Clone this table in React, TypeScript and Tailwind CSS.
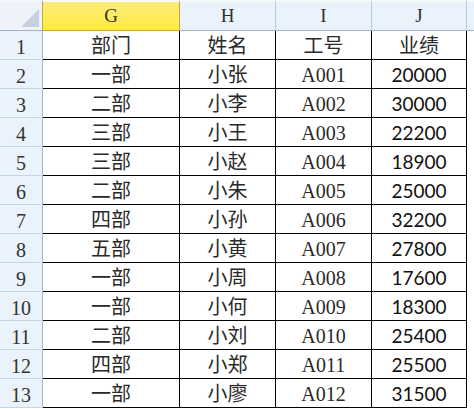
import React from "react";

const rows: [string, string, string, string][] = [
  ["部门", "姓名", "工号", "业绩"],
  ["一部", "小张", "A001", "20000"],
  ["二部", "小李", "A002", "30000"],
  ["三部", "小王", "A003", "22200"],
  ["三部", "小赵", "A004", "18900"],
  ["二部", "小朱", "A005", "25000"],
  ["四部", "小孙", "A006", "32200"],
  ["五部", "小黄", "A007", "27800"],
  ["一部", "小周", "A008", "17600"],
  ["一部", "小何", "A009", "18300"],
  ["二部", "小刘", "A010", "25400"],
  ["四部", "小郑", "A011", "25500"],
  ["一部", "小廖", "A012", "31500"],
];

const dataCell =
  "flex items-center justify-center pt-[2px] border-r border-b border-black text-[20px] text-[#2a2a2a] font-['Liberation_Serif','Noto_Sans_CJK_SC',serif]";

export default function App() {
  return (
    <div className="w-[474px] h-[409px] bg-white overflow-hidden">
      <div className="grid grid-cols-[43px_137px_96px_96px_95px_7px] grid-rows-[31px_repeat(13,29px)]">
        <div className="relative bg-[#eef3f9] border-r border-r-[#c9a24a] border-b border-b-[#9fb3c9] border-t-2 border-t-[#f6f9fc]">
          <div className="absolute right-[3px] bottom-[3px] w-[18px] h-[18px] bg-[#c6d1dd] [clip-path:polygon(100%_0,100%_100%,0_100%)]" />
        </div>
        <div className="flex items-center justify-center bg-gradient-to-b from-[#fcec7a] to-[#ffec33] border-r border-r-[#c9a24a] border-b border-b-[#c9a24a] border-t-2 border-t-[#f6f9fc] text-[19px] text-[#333] font-['Liberation_Serif',serif]">
          G
        </div>
        {["H", "I", "J"].map((c) => (
          <div
            key={c}
            className="flex items-center justify-center bg-[#eaf2fb] border-r border-r-[#b7c9dd] border-b border-b-[#9fb3c9] border-t-2 border-t-[#f6f9fc] text-[19px] text-[#333] font-['Liberation_Serif',serif]"
          >
            {c}
          </div>
        ))}
        <div className="bg-[#eaf2fb] border-b border-b-[#9fb3c9] border-t-2 border-t-[#f6f9fc]" />

        {rows.map((r, i) => (
          <React.Fragment key={i}>
            <div className="flex items-center justify-center pt-[3px] bg-[#eaf2fb] border-r border-r-[#9fb3c9] border-b border-b-[#c5d5e6] text-[20px] text-[#333] font-['Liberation_Serif',serif]">
              {i + 1}
            </div>
            <div className={dataCell}>{r[0]}</div>
            <div className={dataCell}>{r[1]}</div>
            <div className={dataCell}>{r[2]}</div>
            {i === 0 ? (
              <div className={dataCell}>{r[3]}</div>
            ) : (
              <div className="flex items-center justify-center pt-[2px] border-r border-b border-black text-[19px] text-[#111] font-['Lato','Liberation_Sans',sans-serif]">
                {r[3]}
              </div>
            )}
            <div className="bg-white" />
          </React.Fragment>
        ))}
      </div>
    </div>
  );
}
